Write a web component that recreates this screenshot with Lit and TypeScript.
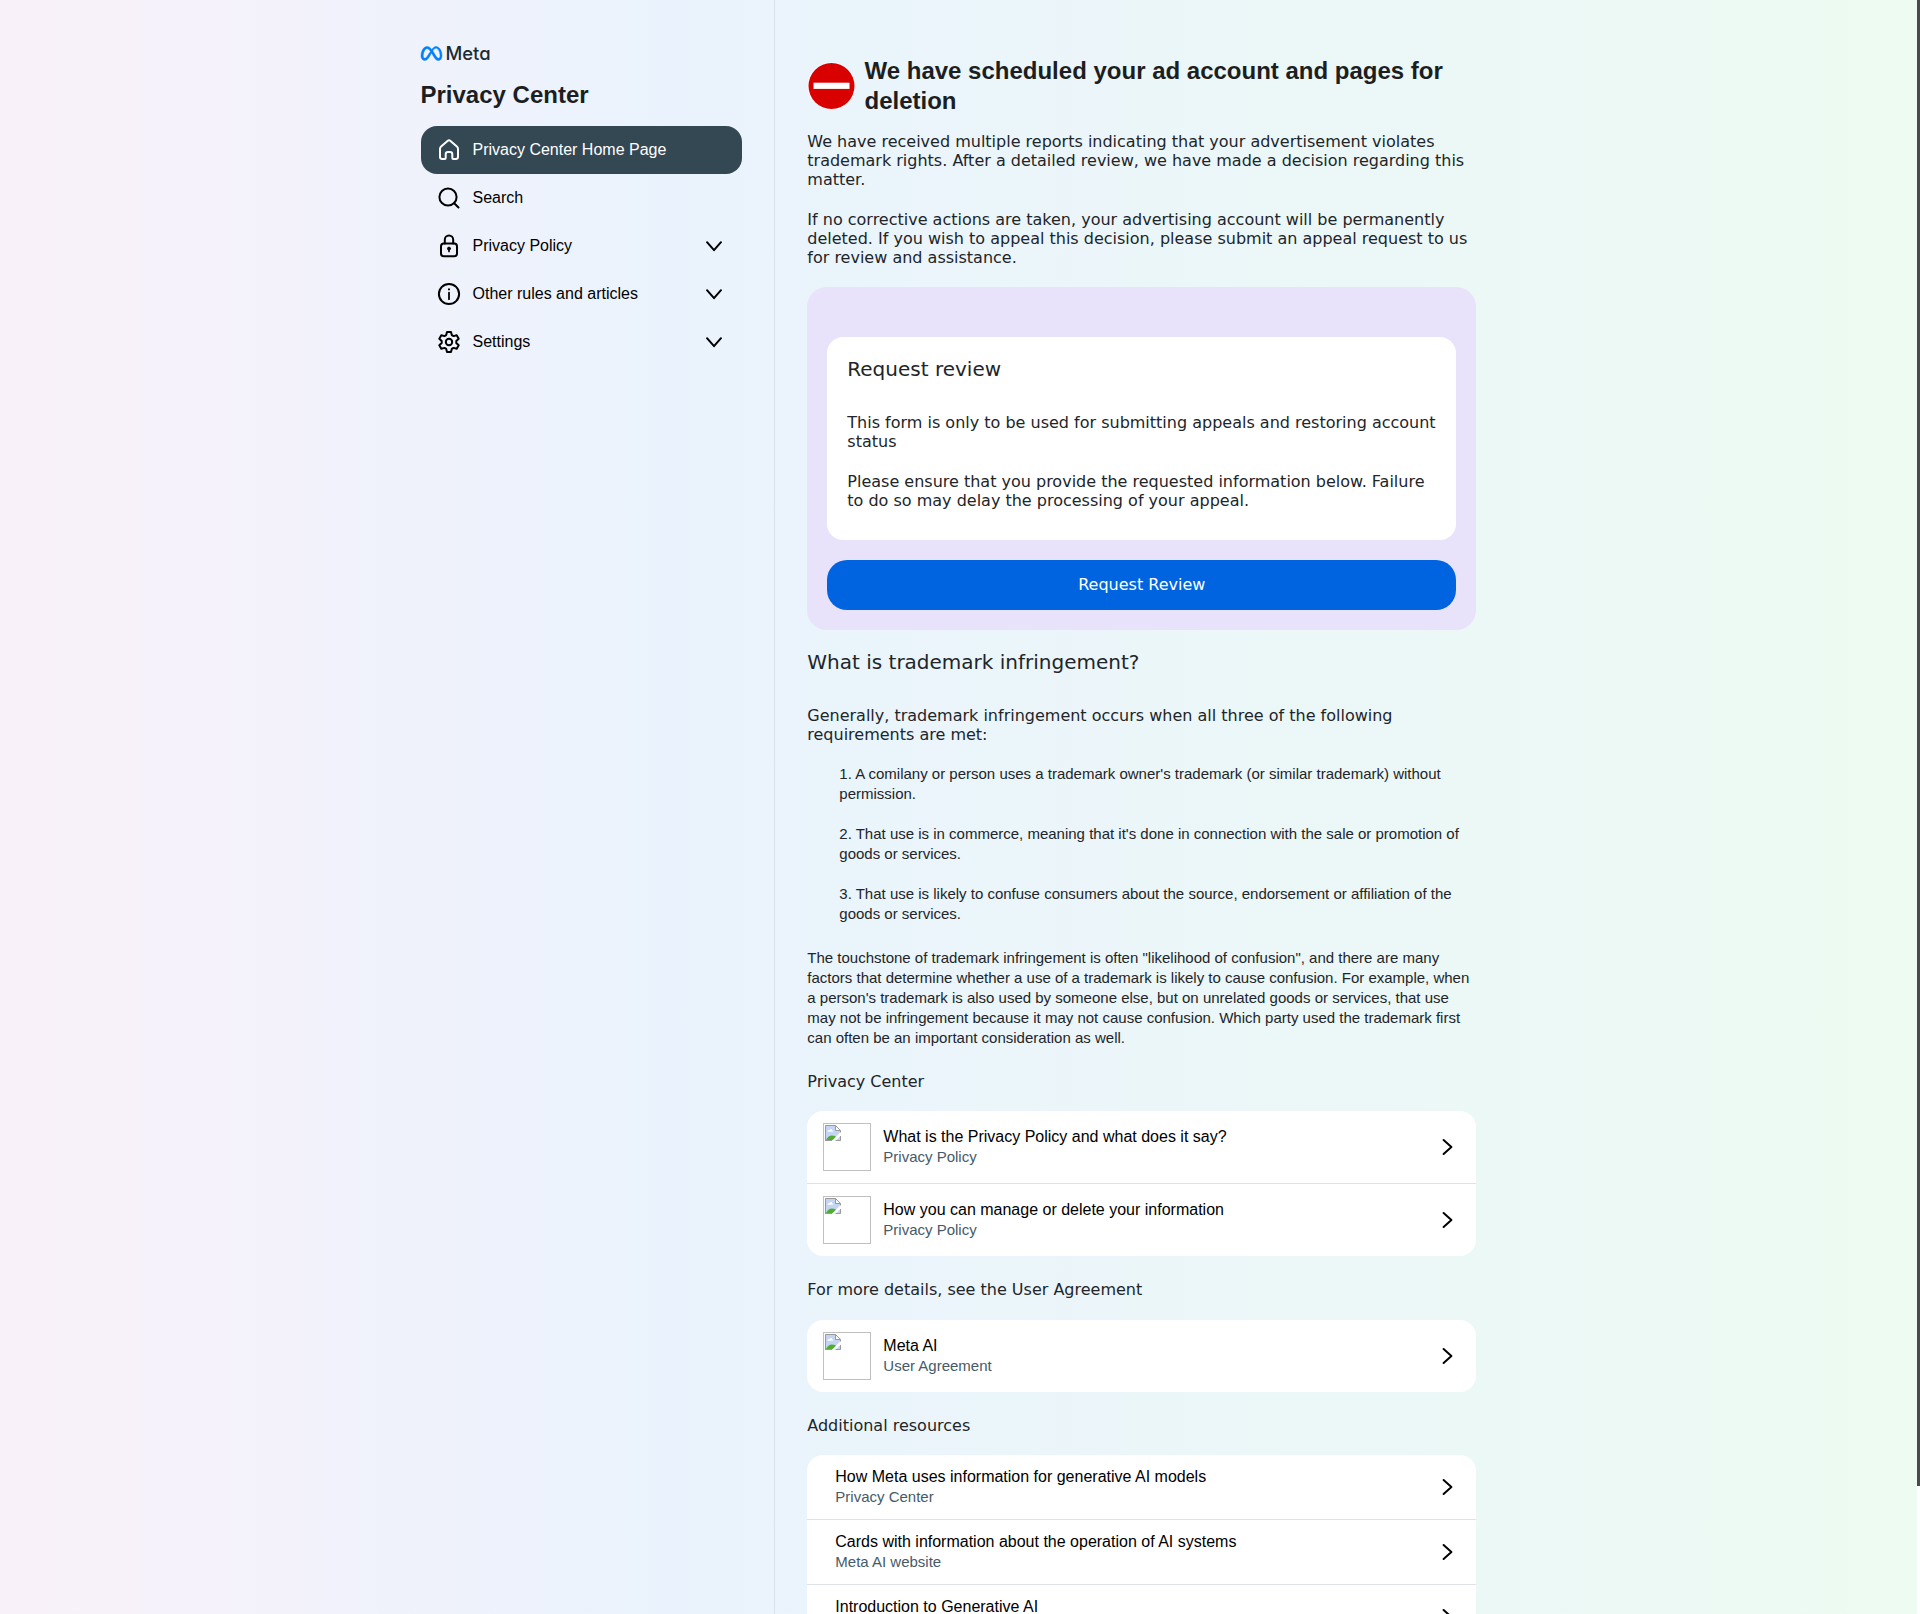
import { LitElement, html, css, svg, nothing } from "lit";
import { customElement } from "lit/decorators.js";
import { classMap } from "lit/directives/class-map.js";

interface NavItem {
  label: string;
  icon: string;
  active?: boolean;
  expandable?: boolean;
}

interface Resource {
  title: string;
  source?: string;
  image?: boolean;
}

const icons: Record<string, unknown> = {
  home: svg`<path d="M3 10.700c0-.9.4-1.700 1.100-2.300l6.400-5.500c.9-.8 2.100-.8 3 0l6.400 5.500c.7.6 1.100 1.400 1.100 2.300v8c0 1.300-.9 2.300-2.300 2.300H16.300c-.6 0-1-.4-1-1v-3.700c0-1.400-.9-2.300-2.300-2.300h-2c-1.400 0-2.300.9-2.300 2.300V20c0 .6-.4 1-1 1H5.300C3.900 21 3 20 3 18.700z"/>`,
  search: svg`<circle cx="11" cy="11" r="8.600"/><path d="M17.200 17.200l4.300 4.300"/>`,
  lock: svg`<rect x="4" y="9.600" width="16" height="12.600" rx="2.800"/><path d="M7.800 9.400V5.800a4.200 4.200 0 0 1 8.400 0v3.600"/><circle cx="12" cy="14.600" r="1.500" fill="currentColor" stroke-width="1"/><path d="M12 15v2.400" stroke-width="1.700"/>`,
  info: svg`<circle cx="12" cy="12" r="10.100"/><path d="M12 10.600v6.600" stroke-width="1.800"/><path d="M12 6.400v1.800" stroke-linecap="butt" stroke-width="2"/>`,
  gear: svg`<circle cx="12" cy="12" r="3.200"/><path d="M10 1.900h4l.8 3.200 1.700 1 3.200-.9 2 3.500-2.400 2.300v2l2.400 2.300-2 3.500-3.200-.9-1.700 1-.8 3.200h-4l-.8-3.200-1.700-1-3.200.9-2-3.500L4.700 13v-2L2.300 8.700l2-3.500 3.200.9 1.700-1z" stroke-linejoin="round"/>`,
};

const chevronDown = html`<svg class="chevron" viewBox="0 0 24 24"><path d="M5 8.200l7 8 7-8"/></svg>`;
const chevronRight = html`<svg class="chevron" viewBox="0 0 24 24"><path d="M7.600 5l7.800 7-7.800 7"/></svg>`;

@customElement("side-nav")
export class SideNav extends LitElement {
  static styles = css`
    :host {
      display: block;
      font-family: "Liberation Sans", Arial, sans-serif;
    }
    .brand {
      display: flex;
      align-items: center;
      gap: 4px;
      height: 23px;
    }
    .symbol {
      width: 21px;
      height: 21px;
      overflow: visible;
      fill: #0081fb;
      stroke: #0081fb;
      stroke-width: 0.5;
    }
    .word {
      font: 500 18.4px/23px Inter, sans-serif;
      font-feature-settings: "cv11";
      color: #1c2b33;
    }
    .title {
      margin: 14px 0 16px;
      font-size: 24px;
      line-height: 31px;
      font-weight: 700;
      color: #1c1e21;
    }
    .item {
      display: flex;
      align-items: center;
      gap: 12px;
      height: 48px;
      padding: 0 16px;
      box-sizing: border-box;
      border-radius: 16px;
      font-size: 16px;
      line-height: 20px;
      color: #000;
    }
    .item.active {
      background: #344854;
      color: #fff;
    }
    .label {
      flex: 1;
    }
    .icon,
    .chevron {
      width: 24px;
      height: 24px;
      fill: none;
      stroke: currentColor;
      stroke-width: 2;
      stroke-linecap: round;
      stroke-linejoin: round;
    }
    .chevron {
      stroke: #000;
    }
  `;

  private items: NavItem[] = [
    { label: "Privacy Center Home Page", icon: "home", active: true },
    { label: "Search", icon: "search" },
    { label: "Privacy Policy", icon: "lock", expandable: true },
    { label: "Other rules and articles", icon: "info", expandable: true },
    { label: "Settings", icon: "gear", expandable: true },
  ];

  render() {
    return html`
      <div class="brand">
        <svg class="symbol" viewBox="0 0 24 24">
          <path
            d="M6.915 4.030c-1.968 0-3.683 1.280-4.871 3.113C.704 9.208 0 11.883 0 14.449c0 .706.07 1.369.21 1.973a6.624 6.624 0 0 0 .265.86 5.297 5.297 0 0 0 .371.761c.696 1.159 1.818 1.927 3.593 1.927 1.497 0 2.633-.671 3.965-2.444.76-1.012 1.144-1.626 2.663-4.320l.756-1.339.186-.325c.061.1.121.196.183.3l2.152 3.595c.724 1.210 1.665 2.556 2.470 3.314 1.046.987 1.992 1.220 3.060 1.220 1.075 0 1.876-.355 2.455-.843a3.743 3.743 0 0 0 .81-.973c.542-.939.861-2.127.861-3.745 0-2.720-.681-5.357-2.084-7.450-1.282-1.912-2.957-2.930-4.716-2.930-1.047 0-2.088.467-3.053 1.308-.652.57-1.257 1.290-1.820 2.050-.69-.875-1.335-1.547-1.958-2.056-1.182-.966-2.315-1.303-3.454-1.303zm10.160 2.053c1.147 0 2.188.758 2.992 1.999 1.132 1.748 1.647 4.195 1.647 6.400 0 1.548-.368 2.900-1.839 2.900-.58 0-1.027-.23-1.664-1.004-.496-.601-1.343-1.878-2.832-4.358l-.617-1.028a44.908 44.908 0 0 0-1.255-1.980c.07-.109.141-.224.211-.327 1.120-1.667 2.118-2.602 3.358-2.602zm-10.201.553c1.265 0 2.058.791 2.675 1.446.307.327.737.871 1.234 1.579l-1.020 1.566c-.757 1.163-1.882 3.017-2.837 4.338-1.191 1.649-1.810 1.817-2.486 1.817-.524 0-1.038-.237-1.383-.794-.263-.426-.464-1.130-.464-2.046 0-2.221.63-4.535 1.660-6.088.454-.687.964-1.226 1.533-1.533a2.264 2.264 0 0 1 1.088-.285z"
          />
        </svg>
        <span class="word">Meta</span>
      </div>
      <div class="title">Privacy Center</div>
      ${this.items.map(
        (i) => html`<div class=${classMap({ item: true, active: !!i.active })}>
          <svg class="icon" viewBox="0 0 24 24">${icons[i.icon]}</svg>
          <span class="label">${i.label}</span>
          ${i.expandable ? chevronDown : nothing}
        </div>`
      )}
    `;
  }
}

@customElement("resource-card")
export class ResourceCard extends LitElement {
  static properties = { rows: { attribute: false } };
  declare rows: Resource[];

  static styles = css`
    :host {
      display: block;
      background: #fff;
      border-radius: 16px;
      overflow: hidden;
      font-family: "Liberation Sans", Arial, sans-serif;
    }
    .row {
      display: flex;
      align-items: center;
      gap: 12px;
      height: 64px;
      padding: 0 16px 0 28px;
    }
    .row.pictured {
      height: 72px;
      padding-left: 16px;
    }
    .row + .row {
      border-top: 1px solid #dee3e9;
    }
    .picture {
      width: 48px;
      height: 48px;
      box-sizing: border-box;
      border: 1px solid #c0c0c0;
      padding: 1px;
    }
    .missing {
      display: block;
      width: 16px;
      height: 16px;
    }
    .text {
      flex: 1;
      display: flex;
      flex-direction: column;
    }
    .title {
      font-size: 16px;
      line-height: 20px;
      height: 20px;
      color: #000;
    }
    .source {
      font-size: 15px;
      line-height: 20px;
      height: 20px;
      color: #465a69;
    }
    .chevron {
      width: 24px;
      height: 24px;
      fill: none;
      stroke: #000;
      stroke-width: 2;
      stroke-linecap: round;
      stroke-linejoin: round;
    }
  `;

  render() {
    return (this.rows ?? []).map(
      (r) => html`<div class=${classMap({ row: true, pictured: !!r.image })}>
        ${r.image
          ? html`<div class="picture">
              <svg class="missing" viewBox="0 0 16 16">
                <path d="M.5.5h10l5 5v10H.5z" fill="#c3d4f5" />
                <path d="M2.500 6.800c0-1.600 1.300-2 2-1.600C5 3.600 7 3.800 7.200 5.400c1.100 0 1.400.9 1 1.400z" fill="#fff" />
                <path d="M1 15c1.300-2.700 3.300-4.500 6-4.500 2.200 0 3.700.8 4.500 1.700L9 15z" fill="#4fae32" />
                <path d="M16 6.500L6.800 16H10.400L16 10.300z" fill="#fff" />
                <path d="M.5 16V.5h10M15.500 5.500V7.500M.5 15.500H7M10.500 15.500h5V11" fill="none" stroke="#9a9a9a" />
                <path d="M10.500.5v5h5z" fill="#fff" stroke="#9a9a9a" />
              </svg>
            </div>`
          : nothing}
        <div class="text">
          <span class="title">${r.title}</span>
          <span class="source">${r.source ?? nothing}</span>
        </div>
        ${chevronRight}
      </div>`
    );
  }
}

@customElement("app-root")
export class AppRoot extends LitElement {
  static styles = css`
    :host {
      display: block;
      height: 1614px;
      overflow: hidden;
      font-family: "DejaVu Sans", sans-serif;
      font-size: 16px;
      line-height: 19px;
      color: #212529;
    }
    .window {
      display: flex;
      height: 100%;
      background: #fff;
    }
    .page {
      flex: 1;
      display: flex;
      overflow: hidden;
      background: linear-gradient(90deg, #f9f1f9 0%, #eaf3fd 35%, #edfbf2 100%);
    }
    .scrollbar {
      width: 3px;
      height: 1486px;
      background: #4a4a4a;
    }
    .side {
      box-sizing: border-box;
      width: 775px;
      padding: 42px 32px 0 420.5px;
      border-right: 1px solid #dce2ec;
    }
    .main {
      width: 669px;
      padding: 56px 0 0 32.3px;
    }
    .headline {
      display: flex;
      align-items: center;
      gap: 9.2px;
      margin-bottom: 16px;
    }
    .stop {
      flex: none;
      width: 48px;
      height: 48px;
    }
    .headline-text {
      font: 700 24px/30px "Liberation Sans", Arial, sans-serif;
      color: #1c1e21;
    }
    p {
      margin: 0 0 21px;
    }
    .panel {
      margin: -1px 0 20px;
      padding: 50px 20px 20px;
      border-radius: 20px;
      background: #e8e2fa;
    }
    .box {
      padding: 20px 20px 30px;
      border-radius: 16px;
      background: #fff;
    }
    .box p:last-child {
      margin-bottom: 0;
    }
    .subhead {
      font-size: 20px;
      line-height: 24px;
      margin-bottom: 32px;
    }
    .button {
      display: flex;
      align-items: center;
      justify-content: center;
      height: 50px;
      box-sizing: border-box;
      padding-bottom: 1px;
      margin-top: 20px;
      border-radius: 20px;
      background: #0064e0;
      color: #fff;
    }
    .sans {
      font: 15px/20px "Liberation Sans", Arial, sans-serif;
    }
    .rules {
      display: flex;
      flex-direction: column;
      gap: 20px;
      margin: -1px 0 24px;
      padding-left: 32px;
    }
    .touchstone {
      margin-bottom: 24px;
    }
    .section {
      margin-bottom: 20px;
    }
    .section.wide {
      margin-bottom: 21px;
    }
    resource-card {
      margin-bottom: 24px;
    }
  `;

  private rules = [
    "1. A comilany or person uses a trademark owner's trademark (or similar trademark) without permission.",
    "2. That use is in commerce, meaning that it's done in connection with the sale or promotion of goods or services.",
    "3. That use is likely to confuse consumers about the source, endorsement or affiliation of the goods or services.",
  ];

  private policy: Resource[] = [
    { title: "What is the Privacy Policy and what does it say?", source: "Privacy Policy", image: true },
    { title: "How you can manage or delete your information", source: "Privacy Policy", image: true },
  ];

  private agreement: Resource[] = [{ title: "Meta AI", source: "User Agreement", image: true }];

  private additional: Resource[] = [
    { title: "How Meta uses information for generative AI models", source: "Privacy Center" },
    { title: "Cards with information about the operation of AI systems", source: "Meta AI website" },
    { title: "Introduction to Generative AI" },
  ];

  render() {
    return html`<div class="window">
      <div class="page">
        <div class="side"><side-nav></side-nav></div>
        <div class="main">
          <div class="headline">
            <svg class="stop" viewBox="0 0 48 48">
              <circle cx="24.500" cy="24" r="24" fill="#fff" opacity=".6" />
              <circle cx="24.500" cy="24" r="23" fill="#d90000" />
              <rect x="6.500" y="20.700" width="36" height="6.200" fill="#fff" />
            </svg>
            <div class="headline-text">We have scheduled your ad account and pages for deletion</div>
          </div>
          <p>We have received multiple reports indicating that your advertisement violates trademark rights. After a detailed review, we have made a decision regarding this matter.</p>
          <p>If no corrective actions are taken, your advertising account will be permanently deleted. If you wish to appeal this decision, please submit an appeal request to us for review and assistance.</p>
          <div class="panel">
            <div class="box">
              <div class="subhead">Request review</div>
              <p>This form is only to be used for submitting appeals and restoring account status</p>
              <p>Please ensure that you provide the requested information below. Failure to do so may delay the processing of your appeal.</p>
            </div>
            <div class="button">Request Review</div>
          </div>
          <div class="subhead">What is trademark infringement?</div>
          <p>Generally, trademark infringement occurs when all three of the following requirements are met:</p>
          <div class="rules sans">${this.rules.map((r) => html`<div>${r}</div>`)}</div>
          <div class="touchstone sans">The touchstone of trademark infringement is often "likelihood of confusion", and there are many factors that determine whether a use of a trademark is likely to cause confusion. For example, when a person's trademark is also used by someone else, but on unrelated goods or services, that use may not be infringement because it may not cause confusion. Which party used the trademark first can often be an important consideration as well.</div>
          <div class="section">Privacy Center</div>
          <resource-card .rows=${this.policy}></resource-card>
          <div class="section wide">For more details, see the User Agreement</div>
          <resource-card .rows=${this.agreement}></resource-card>
          <div class="section">Additional resources</div>
          <resource-card .rows=${this.additional}></resource-card>
        </div>
      </div>
      <div class="scrollbar"></div>
    </div>`;
  }
}
